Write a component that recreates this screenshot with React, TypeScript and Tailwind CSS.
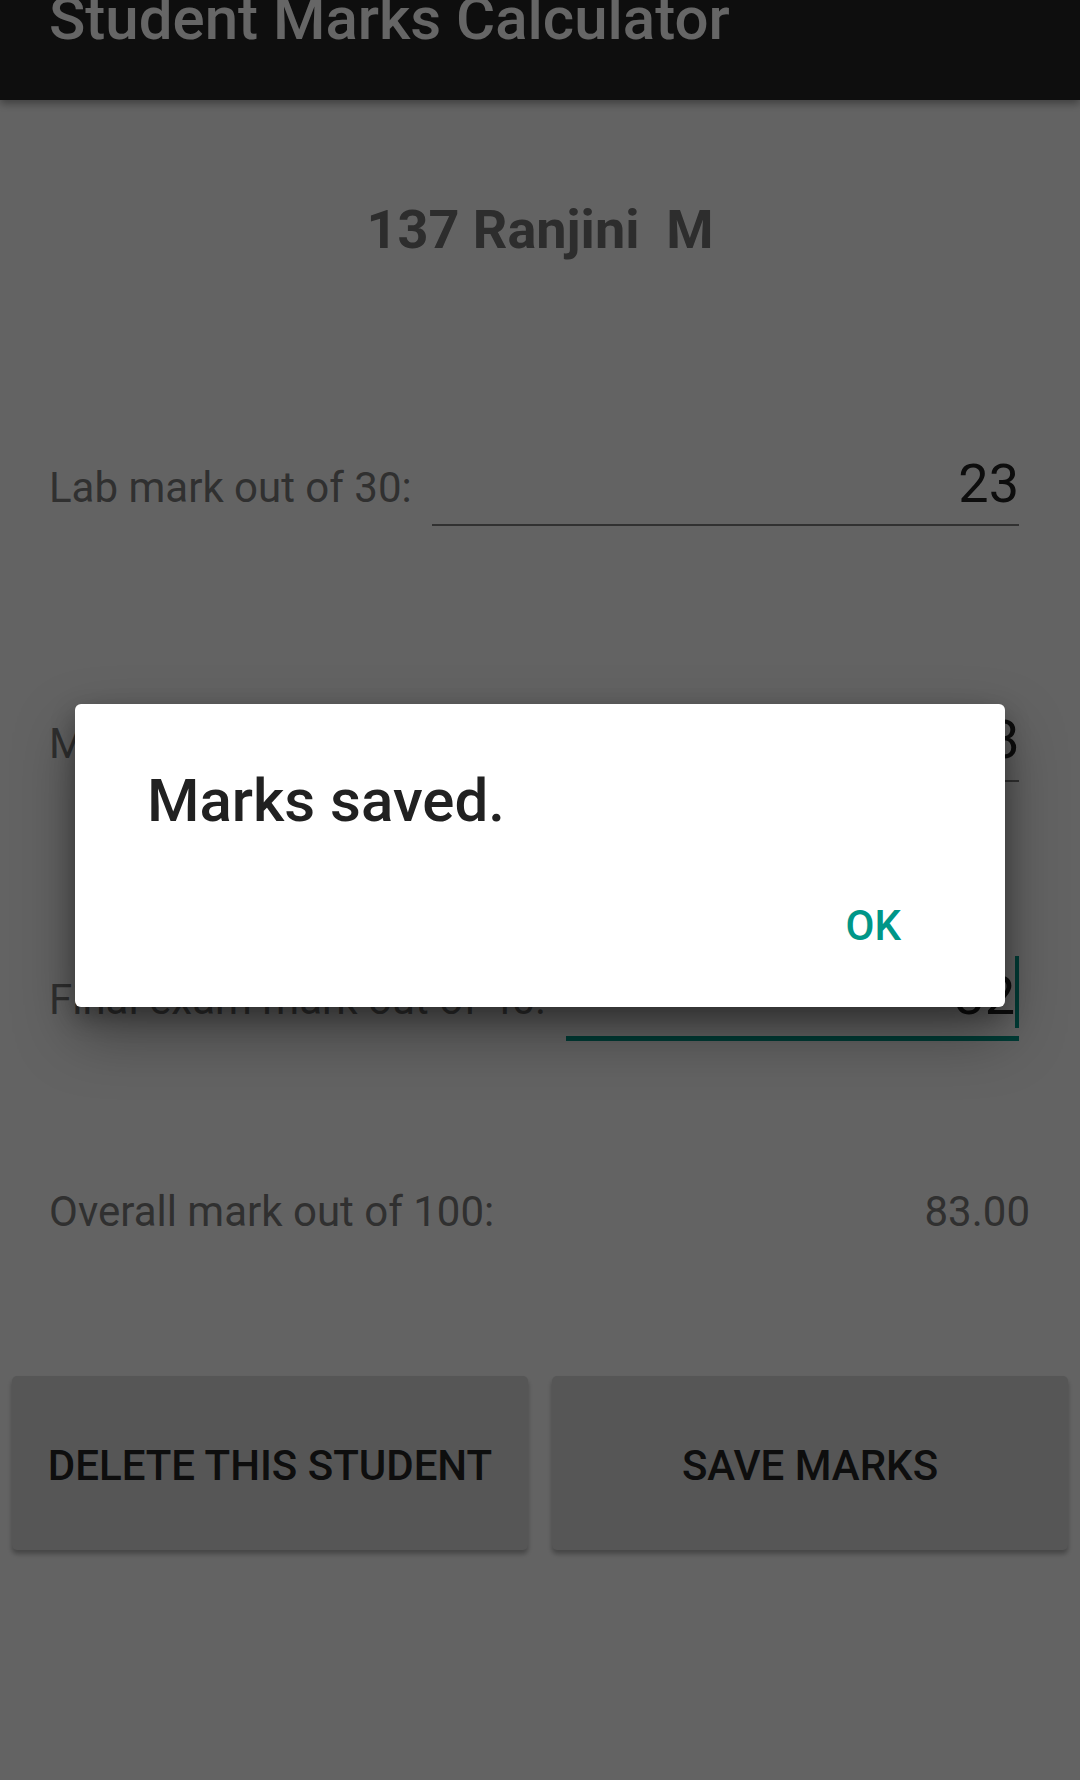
import React from 'react';

const font = { fontFamily: 'Roboto, "Noto Sans", sans-serif' };

interface MarkRowProps {
  label: string;
  value: string;
  focused?: boolean;
  className?: string;
}

const MarkRow: React.FC<MarkRowProps> = ({ label, value, focused, className }) => (
  <div className={`flex items-baseline pl-[49px] pr-[61px] ${className ?? ''}`}>
    <span className="text-[42px] leading-[50px] text-[#787878]">{label}</span>
    <div
      className={`flex-1 ml-[20px] flex items-end justify-end pb-[8px] ${
        focused ? 'border-b-[5px] border-[#009688]' : 'border-b-2 border-[#7a7a7a]'
      }`}
    >
      <span className="text-[54px] leading-[64px] text-[#212121]">{value}</span>
      {focused && <span className="block w-[4px] h-[72px] -mt-[8px] bg-[#009688]" />}
    </div>
  </div>
);

export default function App() {
  return (
    <div className="relative min-h-screen bg-[#f8f8f8] flex flex-col" style={font}>
      {/* Toolbar (top cut off in the screenshot) */}
      <header className="relative z-10 h-[100px] bg-[#232323] shadow-[0_4px_8px_rgba(0,0,0,0.35)] overflow-hidden">
        <div className="pl-[49px] -mt-[11px] text-[60px] leading-[60px] font-medium text-white">
          Student Marks Calculator
        </div>
      </header>

      <main className="flex flex-col">
        <h1 className="mt-[103px] text-center text-[54px] leading-[54px] font-bold text-[#707070] whitespace-pre">
          137 Ranjini  M
        </h1>

        <MarkRow className="mt-[195px]" label="Lab mark out of 30:" value="23" />
        <MarkRow className="mt-[182px]" label="Midterm mark out of 30:" value="28" />
        <MarkRow className="mt-[182px]" label="Final exam mark out of 40:" value="32" focused />

        <div className="mt-[146px] flex justify-between pl-[49px] pr-[50px] text-[42px] leading-[50px] text-[#787878]">
          <span>Overall mark out of 100:</span>
          <span>83.00</span>
        </div>

        <div className="mt-[139px] flex gap-[24px] px-[12px]">
          <button className="flex-1 h-[174px] pt-[4px] rounded-[5px] bg-[#d6d6d6] shadow-[0_4px_5px_rgba(0,0,0,0.3)] text-[42px] font-medium text-[#232323] uppercase">
            Delete this student
          </button>
          <button className="flex-1 h-[174px] pt-[4px] rounded-[5px] bg-[#d6d6d6] shadow-[0_4px_5px_rgba(0,0,0,0.3)] text-[42px] font-medium text-[#232323] uppercase">
            Save marks
          </button>
        </div>
      </main>

      {/* Dialog scrim */}
      <div className="absolute inset-0 z-20 bg-black/60" />

      {/* Alert dialog */}
      <div className="absolute z-30 left-[75px] top-[704px] w-[930px] h-[303px] rounded-[6px] bg-white shadow-[0_27px_60px_rgba(0,0,0,0.35),0_10px_24px_rgba(0,0,0,0.3)] flex flex-col">
        <div className="pl-[72px] pt-[67px] text-[60px] leading-[60px] font-medium text-[#212121]">
          Marks saved.
        </div>
        <div className="mt-[70px] flex justify-end pr-[104px]">
          <span className="text-[42px] leading-[50px] font-medium text-[#009688]">OK</span>
        </div>
      </div>
    </div>
  );
}
